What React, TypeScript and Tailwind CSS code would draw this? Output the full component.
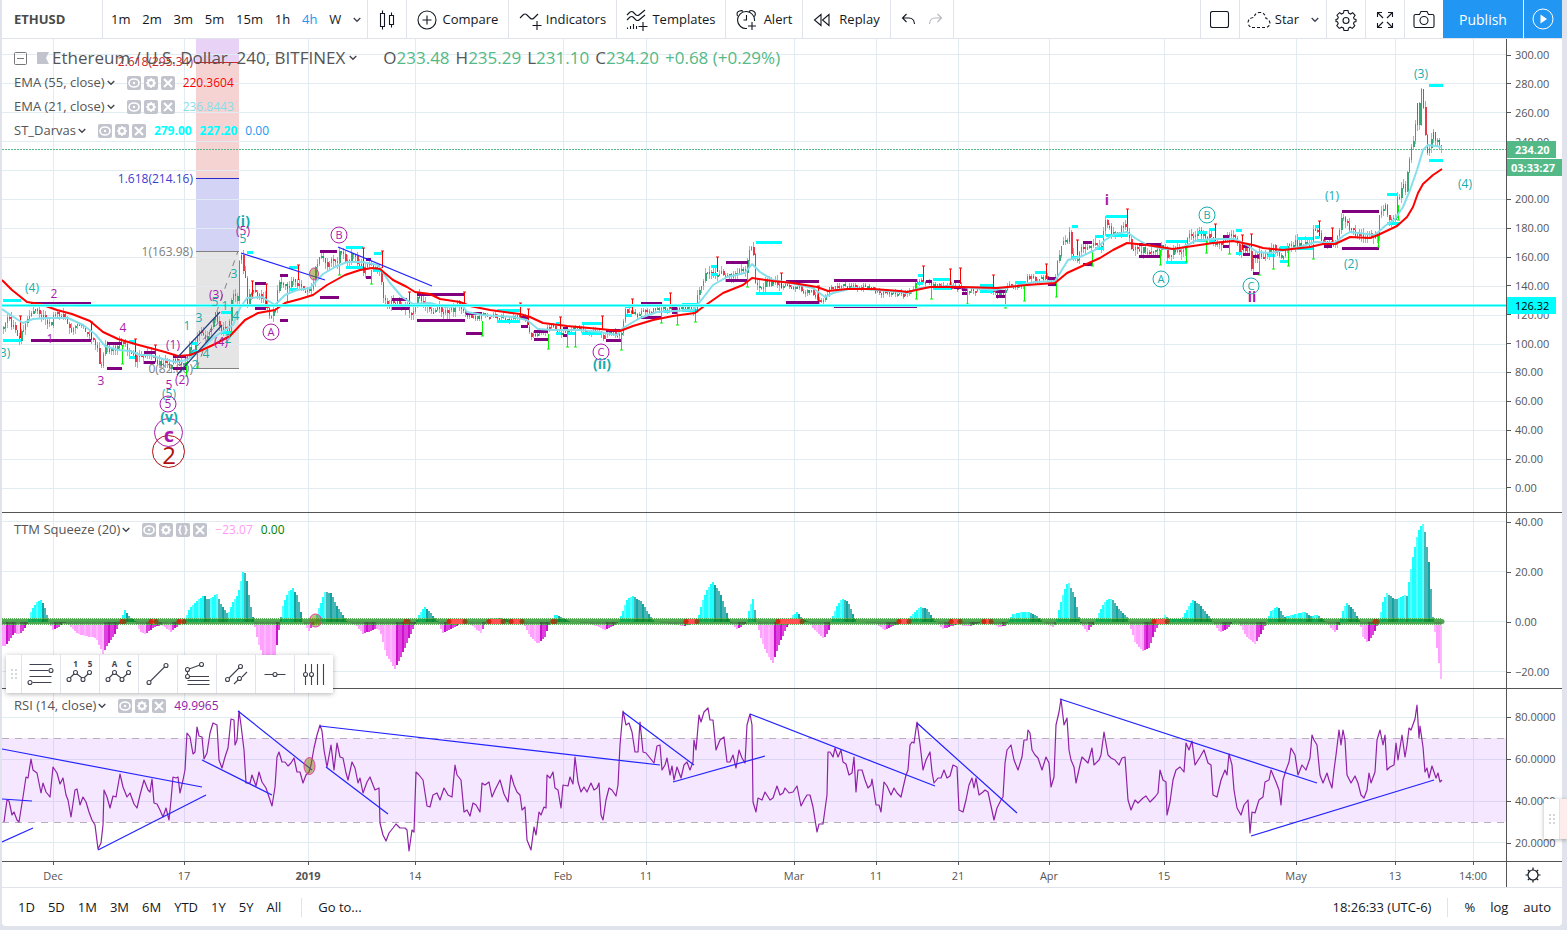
import React from "react";

type Pt = [number, number];
const parse = (s: string): Pt[] => s.trim().split(/\s+/).map((p) => p.split(",").map(Number) as Pt);
const at = (pts: Pt[], x: number) => {
  if (x <= pts[0][0]) return pts[0][1];
  for (let i = 1; i < pts.length; i++) {
    if (x <= pts[i][0]) {
      const [a, b] = [pts[i - 1], pts[i]];
      return a[1] + ((b[1] - a[1]) * (x - a[0])) / (b[0] - a[0] || 1);
    }
  }
  return pts[pts.length - 1][1];
};
const noise = (i: number) => {
  const v = Math.sin(i * 127.1 + 11.7) * 43758.5453;
  return v - Math.floor(v);
};

const CLOSE = parse(`3,327 7,317 13,327 19,337 25,322 32,308 37,312 43,318 50,325 55,312 63,317 72,332 78,323 85,332 90,337 97,350 100,367 105,343 110,353 115,348 121,340 127,350 135,360 142,357 148,353 157,362 163,363 170,367 173,358 180,362 186,363 188,345 193,350 198,332 205,340 210,327 215,315 220,330 228,327 230,317 231,297 237,298 238,263 241,253 243,270 245,280 247,303 252,290 257,298 260,293 266,307 271,318 275,310 278,283 283,287 287,287 292,282 297,283 302,288 307,292 312,287 314,273 318,258 323,257 327,268 332,258 337,260 339,250 343,257 347,263 353,252 358,263 363,270 367,263 373,267 379,270 382,293 385,303 392,303 398,303 407,307 410,318 414,313 417,295 423,300 428,310 440,310 450,312 457,305 463,308 467,317 477,317 485,315 497,317 507,319 518,317 525,320 528,332 532,337 540,333 550,327 560,332 568,332 577,327 587,332 600,332 602,338 610,333 620,335 622,327 624,310 632,313 640,315 642,308 648,312 660,307 667,308 673,310 687,308 695,308 698,293 702,283 707,270 712,272 717,278 723,272 730,275 737,270 746,272 747,257 751,245 753,253 754,282 757,288 765,283 773,283 780,285 790,285 802,290 813,293 818,302 825,298 828,288 840,285 853,287 870,288 882,293 893,293 903,295 913,288 918,278 923,283 932,285 947,286 958,287 967,290 980,288 992,290 995,293 1003,292 1010,285 1023,283 1028,277 1037,280 1047,278 1055,280 1057,263 1062,240 1066,243 1069,235 1070,257 1077,260 1082,248 1088,250 1093,240 1102,245 1104,220 1110,230 1117,232 1126,225 1128,238 1132,250 1147,250 1158,250 1161,243 1165,247 1167,260 1173,252 1185,248 1188,237 1200,233 1207,235 1215,243 1223,240 1230,233 1235,238 1238,252 1247,248 1250,252 1251,267 1253,258 1263,255 1273,248 1280,257 1287,248 1293,242 1300,245 1310,243 1313,232 1319,235 1323,243 1335,243 1338,230 1343,215 1348,227 1352,233 1363,237 1377,235 1378,215 1382,210 1385,207 1388,218 1395,217 1397,197 1398,203 1402,183 1405,195 1408,160 1413,143 1417,104 1419,127 1421,88 1422,96 1425,133 1427,154 1430,143 1432,130 1435,142 1438,140 1442,149`);
const SLOW = "2,280 12,290 27,302 40,304 57,310 72,314 90,321 103,332 118,339 135,344 150,348 165,352 178,356 190,355 200,351 215,344 230,336 245,320 258,313 275,310 285,303 300,299 313,295 327,285 345,275 360,270 372,268 380,269 393,280 407,287 415,292 430,294 440,299 460,302 470,306 490,310 520,314 530,317 543,323 567,326 600,329 620,331 633,326 653,320 673,316 695,313 703,307 723,293 743,285 752,278 773,281 793,283 817,287 828,291 847,289 873,289 900,291 907,292 930,287 963,287 997,288 1027,285 1055,283 1067,273 1080,267 1100,258 1113,250 1127,243 1147,245 1173,249 1193,246 1213,243 1233,241 1253,245 1263,248 1283,250 1310,247 1323,244 1335,244 1350,237 1370,238 1378,235 1397,226 1407,217 1413,207 1418,193 1423,184 1433,175 1442,169";
const FAST = "2,309 12,316 23,323 33,319 47,318 68,318 83,325 95,334 105,346 118,350 130,351 140,355 150,355 163,359 175,362 187,360 197,353 213,338 225,330 233,325 240,308 247,298 262,297 275,305 285,295 297,290 310,288 323,274 335,267 347,262 362,262 378,265 390,283 402,297 413,304 430,303 445,307 463,306 467,312 483,315 513,317 527,320 538,329 553,330 580,330 600,332 617,335 623,328 640,318 657,312 693,310 703,298 713,285 727,277 745,273 752,264 760,272 773,280 790,283 813,288 825,297 833,293 853,288 900,292 907,293 920,288 950,286 995,290 1015,286 1035,282 1055,281 1060,273 1068,260 1080,257 1095,250 1105,240 1115,234 1127,232 1135,238 1147,245 1165,249 1180,249 1195,241 1213,239 1235,239 1247,245 1257,252 1270,253 1285,250 1300,247 1315,242 1335,243 1343,236 1350,232 1375,235 1385,226 1395,219 1403,207 1410,190 1417,170 1423,150 1428,145 1442,147";
const MOMENTUM = parse(`2,-24 6,-24 14,-11 20,-12 24,-8 28,0 32,13 37,20 41,22 44,17 49,0 53,-8 58,-6 64,0 70,-4 78,-12 85,-14 96,-16 103,-32 108,-22 114,-14 120,0 125,12 130,5 136,0 140,-9 145,-12 155,-5 162,-3 171,-10 180,-2 184,0 190,14 196,20 204,27 208,22 217,28 222,16 228,7 233,20 238,27 243,50 246,48 250,20 254,0 258,-20 264,-36 275,-38 280,0 283,16 288,30 293,34 298,25 303,0 309,-9 315,0 319,14 325,30 331,29 338,14 348,0 356,-3 363,-12 375,-7 380,-8 386,-32 395,-47 401,-35 410,-14 416,0 420,9 425,15 431,9 438,0 443,-11 452,-7 462,0 470,-2 481,-11 486,0 490,4 497,4 505,3 515,1 523,0 530,-14 538,-22 545,-15 550,0 556,8 562,4 570,0 590,-1 596,-4 605,-8 613,-4 619,0 624,14 628,24 633,26 642,20 650,6 655,0 665,-1 683,-4 693,-2 697,0 703,22 708,34 713,40 720,30 730,0 737,-7 745,-2 747,0 750,16 753,23 757,0 762,-20 768,-33 773,-41 780,-20 787,-5 789,0 792,6 797,10 803,3 808,0 815,-8 824,-17 829,-8 831,0 836,14 842,24 848,20 856,0 875,-1 885,-8 893,-4 905,0 912,7 920,15 927,13 934,2 937,0 943,-7 955,-3 970,-4 982,0 990,0 1000,-5 1005,-4 1008,0 1013,8 1022,10 1030,10 1038,5 1043,0 1054,-5 1056,0 1062,24 1068,41 1075,25 1080,0 1087,-10 1092,-4 1095,0 1100,11 1106,22 1112,23 1119,13 1127,5 1129,0 1135,-20 1143,-29 1149,-26 1155,-10 1160,0 1165,7 1169,3 1182,3 1188,14 1193,22 1201,16 1212,2 1215,-3 1220,-10 1228,-6 1232,0 1235,1 1240,-2 1246,-14 1255,-22 1261,-12 1267,0 1271,11 1278,16 1284,5 1295,8 1305,10 1311,6 1318,7 1326,0 1336,-11 1340,0 1344,15 1347,19 1354,12 1360,0 1363,-15 1368,-21 1374,-11 1379,0 1383,20 1387,29 1396,22 1404,27 1407,26 1412,60 1418,90 1422,98 1424,98 1429,60 1433,5 1435,-10 1441,-57`);
const RSI = "4,822 7,800 9,801 12,815 14,812 17,820 19,822 23,797 26,777 28,778 31,759 33,770 37,773 41,793 43,783 46,792 50,797 53,767 57,773 60,784 63,778 66,795 68,800 71,817 75,790 77,789 80,805 83,797 86,802 89,812 92,820 95,825 98,849 101,843 103,825 104,790 107,797 110,808 113,796 116,797 120,774 123,787 127,797 130,793 134,804 137,808 140,795 144,780 148,790 150,792 152,779 154,803 157,804 160,810 163,817 166,808 169,820 171,800 173,777 176,778 178,777 180,793 183,780 185,770 187,733 190,737 193,754 195,752 197,727 199,736 202,737 204,759 207,753 210,733 213,723 217,725 219,760 222,768 225,757 228,748 231,719 234,720 235,745 237,740 239,711 241,725 244,750 246,783 250,783 252,775 256,786 259,772 262,782 266,788 270,800 272,806 275,787 277,757 279,752 282,762 285,762 288,766 291,763 294,758 297,772 300,772 303,783 306,775 309,772 311,765 314,748 317,735 320,725 322,731 324,750 327,767 331,745 334,770 337,743 340,757 343,758 346,773 348,780 352,762 355,768 358,783 360,778 363,793 367,782 370,777 373,785 375,790 379,788 380,823 383,835 386,841 389,833 393,828 396,824 400,828 405,828 407,830 409,851 412,830 414,832 416,772 419,775 423,780 427,806 430,807 433,795 437,793 440,800 444,788 448,795 452,797 455,765 457,775 461,780 464,812 467,810 470,816 473,803 476,805 480,812 482,783 485,785 489,782 492,797 495,790 500,780 504,794 508,802 511,775 514,785 517,792 520,795 522,810 525,807 527,840 531,850 534,827 536,835 539,812 541,815 544,807 546,808 547,775 550,778 553,772 555,788 558,790 561,808 563,785 568,786 570,777 573,784 575,757 578,782 581,792 584,787 587,792 591,783 594,790 597,788 599,783 601,815 603,820 606,800 609,788 612,790 616,796 618,785 620,745 623,711 626,725 629,723 632,732 635,752 638,752 640,722 643,752 646,753 650,758 654,763 657,746 660,745 662,770 665,765 667,758 670,775 672,766 674,780 677,767 681,778 684,765 687,762 690,770 693,762 694,740 696,750 699,715 701,722 704,712 708,708 710,720 713,720 716,750 720,740 724,737 727,762 730,762 733,755 736,768 739,750 742,758 745,763 747,725 750,714 752,725 753,802 756,812 758,798 762,800 765,792 770,800 773,798 777,786 780,795 783,793 785,788 789,793 793,792 797,786 801,806 804,800 807,795 810,795 813,807 817,832 819,824 823,824 827,795 828,752 830,752 833,757 835,748 838,757 841,750 843,762 846,764 849,775 852,773 854,757 856,792 858,770 862,770 865,780 868,788 871,785 872,779 876,805 879,805 881,812 884,782 887,786 891,795 894,788 897,793 901,797 903,788 906,775 908,770 910,745 912,742 914,743 917,722 920,744 923,770 926,760 930,752 932,772 934,783 938,778 941,778 944,770 947,778 950,776 953,765 957,767 959,810 963,812 966,800 969,785 972,778 974,788 976,778 979,795 983,792 985,790 988,792 991,806 994,820 997,808 1001,800 1003,797 1005,763 1007,750 1011,745 1014,760 1018,770 1022,757 1024,740 1027,740 1028,730 1030,733 1032,750 1035,755 1038,758 1042,770 1046,757 1049,763 1051,787 1054,777 1056,725 1059,712 1061,699 1064,725 1067,718 1069,750 1071,760 1074,767 1076,783 1080,765 1082,757 1085,760 1088,763 1092,748 1094,765 1099,760 1101,755 1104,732 1108,755 1111,758 1115,760 1119,765 1122,758 1125,757 1128,800 1131,810 1135,800 1138,803 1143,798 1146,796 1150,802 1155,797 1158,793 1160,770 1163,780 1166,782 1167,815 1170,802 1173,780 1176,770 1180,767 1184,772 1186,743 1189,750 1192,741 1195,765 1200,757 1204,750 1208,763 1211,765 1213,795 1217,797 1221,780 1225,770 1227,775 1229,754 1232,765 1234,790 1237,808 1241,815 1244,805 1248,800 1250,833 1252,812 1255,813 1259,800 1263,797 1265,782 1269,780 1271,770 1276,782 1279,790 1281,805 1283,780 1286,770 1289,762 1291,748 1295,755 1298,775 1302,765 1306,770 1310,758 1312,735 1314,740 1317,745 1320,775 1323,783 1327,773 1329,780 1332,788 1334,770 1336,755 1339,730 1341,745 1343,730 1345,740 1347,775 1351,783 1355,776 1358,783 1361,795 1364,798 1367,790 1369,773 1371,783 1375,772 1377,740 1380,730 1383,745 1385,735 1387,770 1390,767 1394,765 1396,743 1398,760 1402,735 1405,757 1407,745 1409,728 1411,730 1415,719 1417,705 1419,738 1420,726 1423,747 1425,772 1427,768 1429,778 1432,766 1436,778 1438,773 1440,782 1442,780";
const triples = (s: string) => s.trim().split(/\s+/).map((p) => p.split(",").map(Number));
const CYAN_BOX = triples("3,21,300 3,21,340 129,135,341 129,135,357 192,197,343 192,197,351 221,231,312 221,231,332 247,253,252 289,298,267 289,298,289 346,363,247 346,363,267 374,382,253 374,382,270 497,520,310 497,520,321 556,561,323 556,561,333 582,602,323 582,602,333 567,575,333 626,632,306 626,632,315 664,670,299 664,670,311 682,697,304 682,697,310 711,717,266 711,717,274 756,782,242 756,782,293 918,923,275 918,923,283 933,950,279 933,951,288 980,993,285 980,993,291 1015,1026,282 1035,1046,272 1072,1078,226 1072,1078,257 1095,1104,236 1095,1104,248 1106,1128,216 1106,1128,235 1166,1187,241 1166,1187,262 1197,1207,232 1197,1207,240 1209,1215,229 1209,1215,241 1236,1242,230 1236,1242,253 1268,1275,255 1280,1288,247 1280,1288,261 1298,1313,238 1298,1313,248 1315,1319,226 1315,1319,237 1387,1398,194 1387,1399,223 1429,1443,85 1429,1443,160");
const PURPLE_BOX = triples("31,91,303 31,91,340 107,122,343 107,122,368 144,155,352 144,155,362 173,186,356 173,186,368 255,266,283 255,266,308 280,288,275 280,288,320 320,337,251 320,339,297 366,371,259 366,371,277 392,407,299 392,409,308 417,465,294 417,465,320 466,482,313 466,482,333 521,528,317 521,528,326 534,548,331 534,548,339 563,568,328 563,568,335 606,621,330 606,621,340 641,662,303 641,662,317 672,677,308 672,677,312 726,748,262 726,747,280 786,819,281 786,819,302 834,917,280 834,917,306 926,932,281 954,961,281 954,961,287 962,967,289 962,967,293 996,1005,291 996,1005,296 1048,1056,278 1048,1056,284 1083,1092,242 1083,1092,264 1139,1161,244 1139,1160,256 1223,1229,236 1223,1229,246 1243,1250,246 1243,1250,254 1253,1259,256 1253,1259,273 1324,1332,238 1324,1332,246 1342,1379,211 1342,1379,248");
const RED_STEM = triples("20,316,338 91,322,340 135,339,357 155,345,362 252,281,299 266,284,308 298,265,280 363,248,268 382,251,268 409,292,308 464,292,306 520,303,318 528,309,325 560,317,330 602,316,330 632,299,314 670,293,308 717,257,272 781,273,288 818,286,301 923,266,281 950,269,285 960,268,284 993,275,288 1046,264,279 1077,240,255 1127,209,224 1215,224,241 1242,235,250 1251,234,249 1319,221,236 1332,228,244");
const GREEN_STEM = triples("122,345,364 186,362,376 197,354,367 231,316,332 287,289,302 339,260,275 371,270,284 482,321,336 548,334,349 567,332,347 575,332,347 621,335,350 661,309,323 677,311,325 695,308,322 747,272,287 916,284,299 931,285,299 967,288,304 1005,294,308 1024,286,301 1056,283,297 1092,251,266 1160,250,265 1186,247,262 1206,239,253 1229,240,254 1259,261,275 1273,253,269 1288,251,266 1313,244,259 1378,236,247 1398,205,220");
const RED_DOTS = triples("122,124,0 151,156,0 179,184,0 406,408,0 449,465,0 489,503,0 511,522,0 553,555,0 686,697,0 778,802,0 899,909,0 951,960,0 984,991,0 1154,1167,0 1375,1377,0");
const RSI_LINES = ["2,749 202,787", "2,799 32,801", "2,842 33,828", "98,850 206,795", "238,711 312,770", "202,760 272,795", "326,767 388,814", "320,726 660,765", "623,712 694,765", "673,782 765,756", "750,714 935,786", "917,723 1017,813", "1060,699 1317,783", "1251,836 1434,780"];

const DATES: [number, string][] = [[53, "Dec"], [184, "17"], [308, "2019"], [415, "14"], [563, "Feb"], [646, "11"], [794, "Mar"], [876, "11"], [958, "21"], [1049, "Apr"], [1164, "15"], [1296, "May"], [1395, "13"], [1473, "14:00"]];
const PRICES = Array.from({ length: 16 }, (_, i) => 300 - i * 20);

type Label = [number, number, string, string, number, boolean?, number?];
const TEAL = "#16acac";
const MAG = "#aa1baa";
const LABELS: Label[] = [
  [32, 288, "(4)", TEAL, 12], [54, 294, "2", MAG, 12], [50, 339, "1", MAG, 12], [123, 328, "4", MAG, 12], [101, 381, "3", MAG, 12], [5, 353, "3)", TEAL, 12],
  [173, 345, "(1)", MAG, 12], [182, 380, "(2)", MAG, 12], [169, 385, "5", MAG, 12], [169, 394, "(5)", TEAL, 12], [168, 404, "5", MAG, 12, false, 8],
  [169, 417, "(v)", TEAL, 14, true], [169, 435, "c", MAG, 20, true, 0], [169, 455, "2", "#b30f0f", 24, false, 0],
  [187, 326, "1", TEAL, 12], [199, 318, "3", TEAL, 12], [195, 365, "2", TEAL, 12], [206, 354, "4", TEAL, 12], [216, 295, "(3)", MAG, 12], [215, 302, "5", TEAL, 12], [225, 306, "1", TEAL, 12], [234, 274, "3", TEAL, 12], [221, 342, "(4)", MAG, 12], [228, 339, "2", TEAL, 12], [236, 316, "4", TEAL, 12],
  [243, 221, "(i)", TEAL, 14, true], [243, 231, "(5)", MAG, 12], [243, 239, "5", TEAL, 12], [271, 332, "A", MAG, 11, false, 8], [339, 235, "B", MAG, 11, false, 8],
  [601, 352, "C", MAG, 11, false, 8], [602, 364, "(ii)", TEAL, 14, true], [1107, 200, "i", MAG, 14, true], [1207, 215, "B", TEAL, 11, false, 8], [1161, 279, "A", TEAL, 11, false, 8], [1251, 286, "C", TEAL, 11, false, 8], [1252, 297, "ii", MAG, 14, true],
  [1332, 196, "(1)", TEAL, 12], [1351, 264, "(2)", TEAL, 12], [1421, 74, "(3)", TEAL, 12], [1465, 184, "(4)", TEAL, 12],
];

const GridV = ({ y1, y2 }: { y1: number; y2: number }) => <>{DATES.map(([x]) => <rect key={x} x={x} y={y1} width="1" height={y2 - y1} fill="#e1ecf2" />)}</>;

const Spot = ({ x, y, rx, ry }: { x: number; y: number; rx: number; ry: number }) => <ellipse cx={x} cy={y} rx={rx} ry={ry} fill="#808000" fillOpacity=".5" stroke="#e040a0" strokeWidth="1" />;

function Candles() {
  const out: React.ReactNode[] = [];
  let prev = CLOSE[0][1];
  for (let i = 0, x = 3; x <= 1442; i++, x += 2) {
    const flat = (x > 465 && x < 690) || (x > 780 && x < 1055);
    const drift = at(CLOSE, x + 2) - at(CLOSE, x - 2);
    const c = at(CLOSE, x) + (noise(i) - 0.5) * (flat ? 5 : 7);
    const up = Math.abs(drift) > 2 ? drift < 0 : c < prev;
    const top = Math.round(Math.min(prev, c));
    const h = Math.max(2, Math.round(Math.abs(prev - c)));
    const reach = flat ? 3 : 6;
    const hi = Math.round(top - noise(i + 99) * reach);
    const lo = Math.round(top + h + noise(i + 777) * reach);
    out.push(
      <g key={x}>
        <rect x={x} y={hi} width="1" height={lo - hi} fill={up ? "#8cc4b8" : "#f48a96"} />
        <rect x={x} y={top} width={i % 3 === 0 ? 2 : 1} height={h} fill={up ? "#35a873" : "#e8394b"} />
      </g>,
    );
    prev = c;
  }
  return <>{out}</>;
}

function PriceChart() {
  return (
    <svg viewBox="2 39 1504 473" preserveAspectRatio="xMaxYMin slice" className="block h-[473px] w-full font-[Trebuchet_MS,Open_Sans,sans-serif]" role="img" aria-label="Price chart">
      <rect x="196" y="39" width="43" height="23" fill="#e8d3f7" /><rect x="196" y="62" width="43" height="117" fill="#f6d3d3" /><rect x="196" y="179" width="43" height="72" fill="#d3d3f5" /><rect x="196" y="251" width="43" height="117" fill="#e5e5e5" />
      <GridV y1={39} y2={512} />
      {PRICES.map((p, i) => <rect key={p} x="2" y={Math.round(54 + i * 28.95)} width="1504" height="1" fill="#e1ecf2" />)}
      <path d="M196 62.5h43" stroke="#cc2828" /><path d="M196 178.5h43" stroke="#2828cc" /><path d="M196 251.5h43M196 368.5h43" stroke="#808080" />
      <path d="M197 368 238 251" stroke="#808080" strokeDasharray="6 6" />
      <g fontSize="12" textAnchor="end"><text x="193" y="66" fill="#cc2828">2.618(295.34)</text><text x="193" y="183" fill="#3c3ccf">1.618(214.16)</text><text x="193" y="256" fill="#808080">1(163.98)</text><text x="193" y="373" fill="#808080">0(82.80)</text></g>
      <path d="M2 149.5H1506" stroke="#53b987" strokeDasharray="2 1" shapeRendering="crispEdges" />
      <Candles />
      {PURPLE_BOX.map(([a, b, y]) => <rect key={`${a}-${y}`} x={a} y={y - 1} width={b - a} height="3" fill="#800080" />)}
      {CYAN_BOX.map(([a, b, y]) => <rect key={`${a}-${y}`} x={a} y={y - 1} width={b - a} height="3" fill="#00ffff" />)}
      {GREEN_STEM.map(([x, a, b]) => <path key={x} d={`M${x + 0.5} ${a}V${b}M${x - 1} ${b}h3`} stroke="#00f400" />)}
      {RED_STEM.map(([x, a, b]) => <path key={x} d={`M${x + 0.5} ${a}V${b}M${x - 1} ${a}h3`} stroke="#ff0000" />)}
      <polyline points={FAST} fill="none" stroke="#84dfec" strokeWidth="2" strokeLinejoin="round" />
      <polyline points={SLOW} fill="none" stroke="#ff0000" strokeWidth="2" strokeLinejoin="round" />
      <rect x="2" y="304" width="1504" height="3" fill="#7ff" /><rect x="2" y="305" width="1504" height="1" fill="#0ee" />
      <path d="M241 253 325 280M338 247 432 286" stroke="#2020ff" strokeWidth="1.2" />
      <path d="M177 358 220 312M177 375 222 325" stroke="#2a3f80" strokeWidth="1.2" /><path d="M179 366 221 320" stroke="#8d5cae" strokeDasharray="5 4" />
      <Spot x={314} y={274} rx={4.5} ry={6} />
      <g fill="none"><circle cx="168.5" cy="432.5" r="14" stroke={MAG} /><circle cx="168.5" cy="451.5" r="16" stroke="#b30f0f" /></g>
      {LABELS.map(([x, y, t, c, s, b, r], i) => (
        <g key={i}>{r ? <circle cx={x} cy={y} r={r} fill="none" stroke={c} /> : null}<text x={x} y={y + Math.round(s * 0.36)} fill={c} fontSize={s} fontWeight={b ? 700 : 400} textAnchor="middle">{t}</text></g>
      ))}
    </svg>
  );
}

function SqueezeChart() {
  const bars: React.ReactNode[] = [];
  for (let x = 2; x <= 1441; x += 2) {
    const v = at(MOMENTUM, x + 1);
    const rising = Math.abs(v) >= Math.abs(at(MOMENTUM, x - 1));
    const alt = (x / 2) % 3 === 0;
    const fill = v >= 0 ? (rising ? (alt ? "#5cffff" : "#1effff") : alt ? "#12a3a3" : "#45b5b5") : rising ? (alt ? "#ffb8ff" : "#ffa2ff") : alt ? "#cc10cc" : "#dd40dd";
    const h = Math.round(Math.abs(v));
    if (h) bars.push(<rect key={x} x={x} y={v >= 0 ? 622 - h : 622} width="2" height={h} fill={fill} />);
  }
  return (
    <svg viewBox="2 513 1504 175" preserveAspectRatio="xMaxYMin slice" className="block h-[175px] w-full" role="img" aria-label="Squeeze histogram">
      <GridV y1={513} y2={688} />
      {[521, 571, 621, 671].map((y) => <rect key={y} x="2" y={y} width="1504" height="1" fill="#e1ecf2" />)}
      <g shapeRendering="crispEdges">{bars}</g>
      <path d="M2 621.5H1442" stroke="#008000" strokeOpacity=".68" strokeWidth="5" strokeLinecap="round" />
      <path d="M2 618.5H1442M2 624.5H1442" stroke="#58b058" strokeDasharray="1 1" />
      {RED_DOTS.map(([a, b]) => <g key={a}><path d={`M${a} 621.5H${b}`} stroke="#ff5050" strokeWidth="5" /><circle cx={a} cy="621.5" r="2.5" fill="#cc2a10" /><circle cx={b} cy="621.5" r="2.5" fill="#80501a" /></g>)}
      <Spot x={315.5} y={620.5} rx={6} ry={6.5} />
    </svg>
  );
}

function RsiChart() {
  return (
    <svg viewBox="2 689 1504 172" preserveAspectRatio="xMaxYMin slice" className="block h-[172px] w-full" role="img" aria-label="RSI chart">
      <GridV y1={689} y2={861} />
      {[717, 759, 801, 842].map((y) => <rect key={y} x="2" y={y} width="1504" height="1" fill="#e1ecf2" />)}
      <rect x="2" y="738" width="1504" height="84" fill="#9915ff" fillOpacity=".1" />
      <path d="M2 738.5H1506M2 822.5H1506" stroke="#b8aebc" strokeDasharray="7 6" />
      <polyline points={RSI} fill="none" stroke="#8f22a6" strokeWidth="1.2" strokeLinejoin="round" />
      {RSI_LINES.map((p) => <polyline key={p} points={p} stroke="#2222ff" strokeWidth="1.2" />)}
      <Spot x={309.5} y={766} rx={5.5} ry={8.5} />
    </svg>
  );
}

const Chevron = () => <svg width="8" height="6" viewBox="0 0 8 6" fill="none" stroke="#40434f" strokeWidth="1.3"><path d="m.7 1 3.3 3.3L7.3 1" /></svg>;

const Chip = ({ kind }: { kind: "eye" | "gear" | "code" | "x" }) => (
  <button aria-label={kind} className="flex h-[14px] w-[14px] items-center justify-center rounded-[2px] bg-[#c1c4cd]">
    <svg width="14" height="14" viewBox="0 0 14 14" fill="none" stroke="#fff" strokeWidth="1.6">
      {kind === "eye" && <><ellipse cx="7" cy="7" rx="5" ry="4" /><circle cx="7" cy="7" r="1.2" fill="#fff" stroke="none" /></>}
      {kind === "gear" && <><circle cx="7" cy="7" r="3" strokeWidth="2" /><path d="M7 2v1.500M7 10.500V12M2 7h1.500M10.500 7H12M3.500 3.500l1 1M9.500 9.500l1 1M3.500 10.500l1-1M9.500 4.500l1-1" /></>}
      {kind === "code" && <path d="M5.500 3Q4 3 4 4.500V6L3 7l1 1v1.500Q4 11 5.500 11M8.500 3Q10 3 10 4.500V6l1 1-1 1v1.500Q10 11 8.500 11" />}
      {kind === "x" && <path d="m3 3 8 8M11 3l-8 8" strokeWidth="2" />}
    </svg>
  </button>
);

function Study({ name, chips, children }: { name: string; chips: ("eye" | "gear" | "code" | "x")[]; children: React.ReactNode }) {
  return (
    <div className="flex h-6 items-center text-[#555]">
      <span className="pr-0.5 text-[13px]">{name}</span><Chevron />
      <span className="ml-3 mr-2 flex gap-[3px]">{chips.map((c) => <Chip key={c} kind={c} />)}</span>
      <span className="flex gap-2 text-[12px]">{children}</span>
    </div>
  );
}

const Tool = ({ className, children, label }: { className: string; children: React.ReactNode; label?: string }) => (
  <button aria-label={label} className={`flex h-full shrink-0 items-center justify-center whitespace-nowrap border-r border-[#e0e3eb] pt-px ${className}`}>{children}</button>
);

const Pic = ({ w, h = 28, children }: { w: number; h?: number; children: React.ReactNode }) => <svg width={w} height={h} viewBox={`0 0 ${w} ${h}`} fill="none" stroke="#131722" strokeWidth="1.1" className="shrink-0">{children}</svg>;

function TopBar() {
  return (
    <header className="flex h-[39px] items-stretch border-b border-[#e0e3eb] bg-white text-[13px] text-[#131722]">
      <button className="w-[101px] shrink-0 border-r border-[#e0e3eb] pl-3 pt-px text-left font-bold text-[#4a4a4a]">ETHUSD</button>
      <nav className="flex w-[265px] shrink-0 items-center justify-between border-r border-[#e0e3eb] pl-2 pr-1.5 pt-0.5">
        {["1m", "2m", "3m", "5m", "15m", "1h", "4h", "W"].map((t) => <button key={t} className={t === "4h" ? "text-[#2196f3]" : ""}>{t}</button>)}
        <button aria-label="More intervals"><Chevron /></button>
      </nav>
      <Tool className="w-[39px]" label="Candles"><Pic w={16} h={22}><path d="M1.500 4.500h4v13h-4zM3.500 1.500v3M3.500 17.500v3M10.500 6.500h4v9h-4zM12.500 3.500v3M12.500 15.500v3" /></Pic></Tool>
      <Tool className="w-[102px] gap-1.5"><Pic w={20} h={20}><circle cx="10" cy="10" r="9" /><path d="M5.500 10h9M10 5.500v9" /></Pic>Compare</Tool>
      <Tool className="w-[108px] gap-1"><Pic w={23} h={22}><path d="M1 9q2-2 3-3 2-2 4 0l3 3q2 2 4 0l4-4M13.500 16.500h9M18 12v9" /></Pic>Indicators</Tool>
      <Tool className="w-[109px] gap-1"><Pic w={22} h={22}><path d="M1 6l3-3q2-1 3 0l3 3q2 1 3 0l6-5M1 11l3-3q2-1 3 0l3 3q2 1 3 0l6-5M1.500 18.500v1.500M4.500 17v3M7.500 15v5M10.500 17v3M12.500 17.500h9M17 13v9" /></Pic>Templates</Tool>
      <Tool className="w-[77px] gap-1.5"><Pic w={22} h={22}><path d="M11 19.500A8.500 8.500 0 1 1 18.500 12M10.500 6v5h-3M12 17h8M16 13v8M1.500 7Q0 3 3.500 2 6 1 7 2.500M13 2.500q2-2 5 0 2.500 2 .5 5" /></Pic>Alert</Tool>
      <Tool className="w-[88px] gap-2"><Pic w={18} h={14}><path d="M8 1.500v11L1.500 7zM16 1.500v11L9.500 7z" /></Pic>Replay</Tool>
      <div className="flex w-[63px] shrink-0 items-center justify-center gap-3 border-r border-[#e0e3eb]">
        <button aria-label="Undo"><Pic w={15} h={12}><path d="M5.500 1 1.500 5l4 4M1.500 5H8q5 0 5.500 6" /></Pic></button>
        <button aria-label="Redo" className="opacity-30"><Pic w={15} h={12}><path d="m9.500 1 4 4-4 4M13.500 5H7Q2 5 1.500 11" /></Pic></button>
      </div>
      <div className="flex-1 border-r border-[#e0e3eb]" />
      <Tool className="w-[39px]" label="Layout"><Pic w={20} h={18}><rect x=".5" y=".5" width="18" height="16" rx="2" /></Pic></Tool>
      <Tool className="w-[87px] gap-1"><Pic w={24} h={18}><path strokeDasharray="3 2" d="M5 16.500h14q4-1 4-4.500-1-4-4-4.500Q18 1 12 1.500 8 2 7 6.500 1 7 1 12q1 4 4 4.500" /></Pic>Star<span className="pl-2"><Chevron /></span></Tool>
      <Tool className="w-[39px]" label="Settings"><Pic w={22} h={22}><path d="M9 1.500h4l.5 2.500 2 1 2.200-1.300 2.400 2.600L18.600 8.500l.6 1.600 1.800.4v2l-1.800.5-.7 1.700 1.300 2-2.400 2.700-2.300-1.200-1.600.8-.5 2.500H9l-.6-2.500-1.900-.8-2.200 1.200-2.500-2.600 1.400-2.200-.7-1.800L1 12.500v-2l1.600-.5.7-1.700L2 6.200l2.500-2.600L6.600 5l1.900-1z" /><circle cx="11" cy="11.500" r="3" /></Pic></Tool>
      <Tool className="w-[39px]" label="Fullscreen"><Pic w={18} h={18}><path d="M1.500 6V1.500H6M12 1.500h4.500V6M16.500 12v4.500H12M6 16.500H1.500V12M2 2l5 5M16 2l-5 5M16 16l-5-5M2 16l5-5" /></Pic></Tool>
      <Tool className="w-[38px] border-r-0" label="Snapshot"><Pic w={22} h={18}><path d="M2.500 3.500h4l1.500-3h6l1.500 3h4q1.500 0 1.500 1.500v10q0 1.500-1.500 1.500h-17Q1 16.500 1 15V5q0-1.500 1.500-1.500z" /><circle cx="11" cy="9.500" r="4" /></Pic></Tool>
      <button className="w-[81px] shrink-0 border-r border-white bg-[#2196f3] text-[14px] text-white">Publish</button>
      <button aria-label="Play" className="flex w-[38px] shrink-0 items-center justify-center bg-[#2196f3]"><svg width="22" height="22" viewBox="0 0 22 22" fill="none" stroke="#fff"><circle cx="11" cy="11" r="10" /><path d="M8.500 6.500 15 11l-6.500 4.500z" fill="#fff" stroke="none" /></svg></button>
    </header>
  );
}

const Tick = ({ children }: { children: React.ReactNode }) => <div className="flex h-4 items-center gap-1"><i className="h-px w-1 bg-[#555]" />{children}</div>;
const Axis = ({ className, values }: { className: string; values: string[] }) => <div className={`flex flex-col justify-between text-[11px] leading-4 text-[#555] ${className}`}>{values.map((v) => <Tick key={v}>{v}</Tick>)}</div>;

const Dots = () => <span className="grid grid-cols-2 gap-[2px]">{Array.from({ length: 6 }, (_, i) => <i key={i} className="h-[2px] w-[2px] bg-[#d5d7dd]" />)}</span>;

const Wave = ({ a, b }: { a: string; b: string }) => (
  <g>
    <path d="m4 18 4-4M11 14l5 4M18 18l4-4" /><circle cx="3" cy="19.5" r="2" /><circle cx="9.500" cy="12.5" r="2" /><circle cx="17" cy="19.5" r="2" /><circle cx="23.500" cy="12.5" r="2" />
    <g fontSize="8" fontWeight="700" fill="#40434f" stroke="none" textAnchor="middle"><text x="9.500" y="7">{a}</text><text x="24" y="7">{b}</text></g>
  </g>
);

const DRAW: [string, React.ReactNode][] = [
  ["Fib retracement", <g key="a"><path d="M2.500 4.500h22M2.500 10.500h19M2.500 16.500h22M5.500 22.500h19" /><circle cx="24" cy="10.500" r="2" /><circle cx="3" cy="22.500" r="2" /></g>],
  ["Elliott impulse", <Wave key="b" a="1" b="5" />],
  ["Elliott correction", <Wave key="c" a="A" b="C" />],
  ["Trend line", <g key="d"><path d="M6.500 21 20.500 7" /><circle cx="5" cy="22.500" r="2" /><circle cx="22" cy="5.500" r="2" /></g>],
  ["Fib extension", <g key="e"><path d="M6 9 17 5M4.500 12v3M6 16.500h20M4.500 20.500h22M4.500 24.500h22" /><circle cx="4.500" cy="9.500" r="2" /><circle cx="4.500" cy="16.500" r="2" /><circle cx="18.500" cy="4.500" r="2" /></g>],
  ["Parallel channel", <g key="f"><path d="M7 18 17 8M12 24l4-4M20 17l5-5" /><circle cx="5.500" cy="19.500" r="2" /><circle cx="18.500" cy="6.500" r="2" /><circle cx="17.500" cy="18.500" r="2" /></g>],
  ["Horizontal line", <g key="g"><path d="M3.500 14.500h8.500M16 14.500h8.500" /><circle cx="14" cy="14.500" r="2" /></g>],
  ["Time zones", <g key="h"><path d="M5.500 4v8M5.500 17v8M11.500 4v8M11.500 17v8M17.500 4v21M23.500 4v21" /><circle cx="5.500" cy="14.500" r="2" /><circle cx="11.500" cy="14.500" r="2" /></g>],
];

export default function App() {
  return (
    <div className="relative flex min-h-screen flex-col overflow-hidden bg-[#e0e3eb] pl-[2px] pr-[5px] font-[Trebuchet_MS,Open_Sans,sans-serif]">
      <TopBar />
      <main className="bg-white">
        <section className="flex h-[474px] border-b border-[#555]">
          <div className="relative min-w-0 flex-1">
            <PriceChart />
            <div className="absolute left-3 top-[5px]">
              <div className="flex h-[27px] items-center whitespace-nowrap text-[17px] text-[#555]">
                <svg width="38" height="16" viewBox="0 0 38 16" fill="none" stroke="#777"><rect x=".5" y="2.500" width="12" height="12" rx="1" /><path d="M3 8.500h7" /><path d="M23 2h12l-3 6 3 6H23z" fill="#c1c4cd" stroke="none" /></svg>
                <span className="pr-1">Ethereum / U.S. Dollar, 240, BITFINEX</span><Chevron />
                <span className="ml-[26px] flex gap-1.5 text-[#53b987]">{["O233.48", "H235.29", "L231.10", "C234.20"].map((v) => <span key={v}><span className="text-[#555]">{v[0]}</span>{v.slice(1)}</span>)}<span>+0.68 (+0.29%)</span></span>
              </div>
              <Study name="EMA (55, close)" chips={["eye", "gear", "x"]}><span className="text-[#f00]">220.3604</span></Study>
              <Study name="EMA (21, close)" chips={["eye", "gear", "x"]}><span className="text-[#84dfec]">236.8443</span></Study>
              <Study name="ST_Darvas" chips={["eye", "gear", "x"]}><b className="text-[#0ff]">279.00</b><b className="text-[#0ff]">227.20</b><span className="text-[#2196f3]">0.00</span></Study>
            </div>
          </div>
          <aside className="relative w-14 shrink-0 border-l border-[#555]">
            <Axis className="h-full pb-4 pt-2" values={PRICES.map((p) => p.toFixed(2))} />
            <b className="absolute left-0 top-[102px] h-[17px] w-[49px] bg-[#53b987] pl-2 text-[11px] leading-[17px] text-white">234.20</b>
            <b className="absolute left-0 top-[120px] h-[17px] w-[55px] bg-[#53b987] pl-1 text-[11px] leading-[17px] text-white">03:33:27</b>
            <span className="absolute left-0 top-[258px] h-[17px] w-[49px] bg-[#0ff] pl-2 text-[11px] leading-[17px] text-black">126.32</span>
          </aside>
        </section>
        <section className="flex h-[176px] border-b border-[#555]">
          <div className="relative min-w-0 flex-1">
            <SqueezeChart />
            <div className="absolute left-3 top-[5px]"><Study name="TTM Squeeze (20)" chips={["eye", "gear", "code", "x"]}><span className="text-[#ff9cf5]">−23.07</span><span className="text-[#008000]">0.00</span></Study></div>
          </div>
          <aside className="w-14 shrink-0 border-l border-[#555]"><Axis className="h-full pb-2 pt-px" values={["40.00", "20.00", "0.00", "−20.00"]} /></aside>
        </section>
        <section className="flex h-[173px] border-b border-[#555]">
          <div className="relative min-w-0 flex-1">
            <RsiChart />
            <div className="absolute left-3 top-[5px]"><Study name="RSI (14, close)" chips={["eye", "gear", "x"]}><span className="text-[#8f22a6]">49.9965</span></Study></div>
          </div>
          <aside className="w-14 shrink-0 border-l border-[#555]"><Axis className="h-full pb-2.5 pt-5" values={["80.0000", "60.0000", "40.0000", "20.0000"]} /></aside>
        </section>
        <section className="flex h-[26px] border-b border-[#e0e3eb]">
          <svg viewBox="2 862 1504 25" preserveAspectRatio="xMaxYMin slice" className="block h-[25px] min-w-0 flex-1 font-[Trebuchet_MS,Open_Sans,sans-serif]" fontSize="11" textAnchor="middle" fill="#555">
            {DATES.map(([x, t]) => <g key={x}><rect x={x} y="862" width="1" height="3" /><text x={x} y="880" fontWeight={t === "2019" ? 700 : 400}>{t}</text></g>)}
          </svg>
          <button aria-label="Scale settings" className="flex w-14 shrink-0 items-center justify-center border-l border-[#555] pr-1"><svg width="16" height="16" viewBox="0 0 16 16" fill="none" stroke="#131722" strokeWidth="1.2"><circle cx="8" cy="8" r="5" /><path d="M8 .5V3M8 13v2.500M.5 8H3M13 8h2.500M2.800 2.800l1.700 1.700M11.500 11.500l1.700 1.700M2.800 13.200l1.700-1.700M11.500 4.500l1.700-1.700" /></svg></button>
        </section>
      </main>
      <footer className="flex h-[38px] items-center rounded-b bg-white pl-4 pr-[11px] pt-px text-[13px] text-[#131722]">
        <nav className="flex gap-[13px]">{["1D", "5D", "1M", "3M", "6M", "YTD", "1Y", "5Y", "All"].map((t) => <button key={t}>{t}</button>)}</nav>
        <button className="ml-5 border-l border-[#e0e3eb] pl-4">Go to...</button>
        <span className="flex-1" />
        <button className="border-r border-[#e0e3eb] pr-4">18:26:33 (UTC-6)</button>
        <span className="flex gap-[15px] pl-4"><button>%</button><button>log</button><button>auto</button></span>
      </footer>
      <div className="absolute left-[6px] top-[655px] flex h-[38px] bg-white shadow-[0_1px_5px_rgba(0,0,0,0.3)]">
        <span className="flex w-[15px] items-center justify-center"><Dots /></span>
        {DRAW.map(([n, g]) => <button key={n} aria-label={n} className="flex w-[39px] items-center justify-center border-l border-[#e0e3eb]"><svg width="28" height="28" viewBox="0 0 28 28" fill="none" stroke="#40434f" strokeWidth="1.1" className="overflow-visible">{g}</svg></button>)}
      </div>
      <div className="absolute right-0 top-[799px] flex h-10 w-[23px] bg-white shadow-[0_1px_4px_rgba(0,0,0,0.3)]"><span className="flex w-4 items-center justify-center border-r border-[#e0e3eb]"><Dots /></span><i className="flex-1 bg-[#fdecec]" /></div>
    </div>
  );
}
